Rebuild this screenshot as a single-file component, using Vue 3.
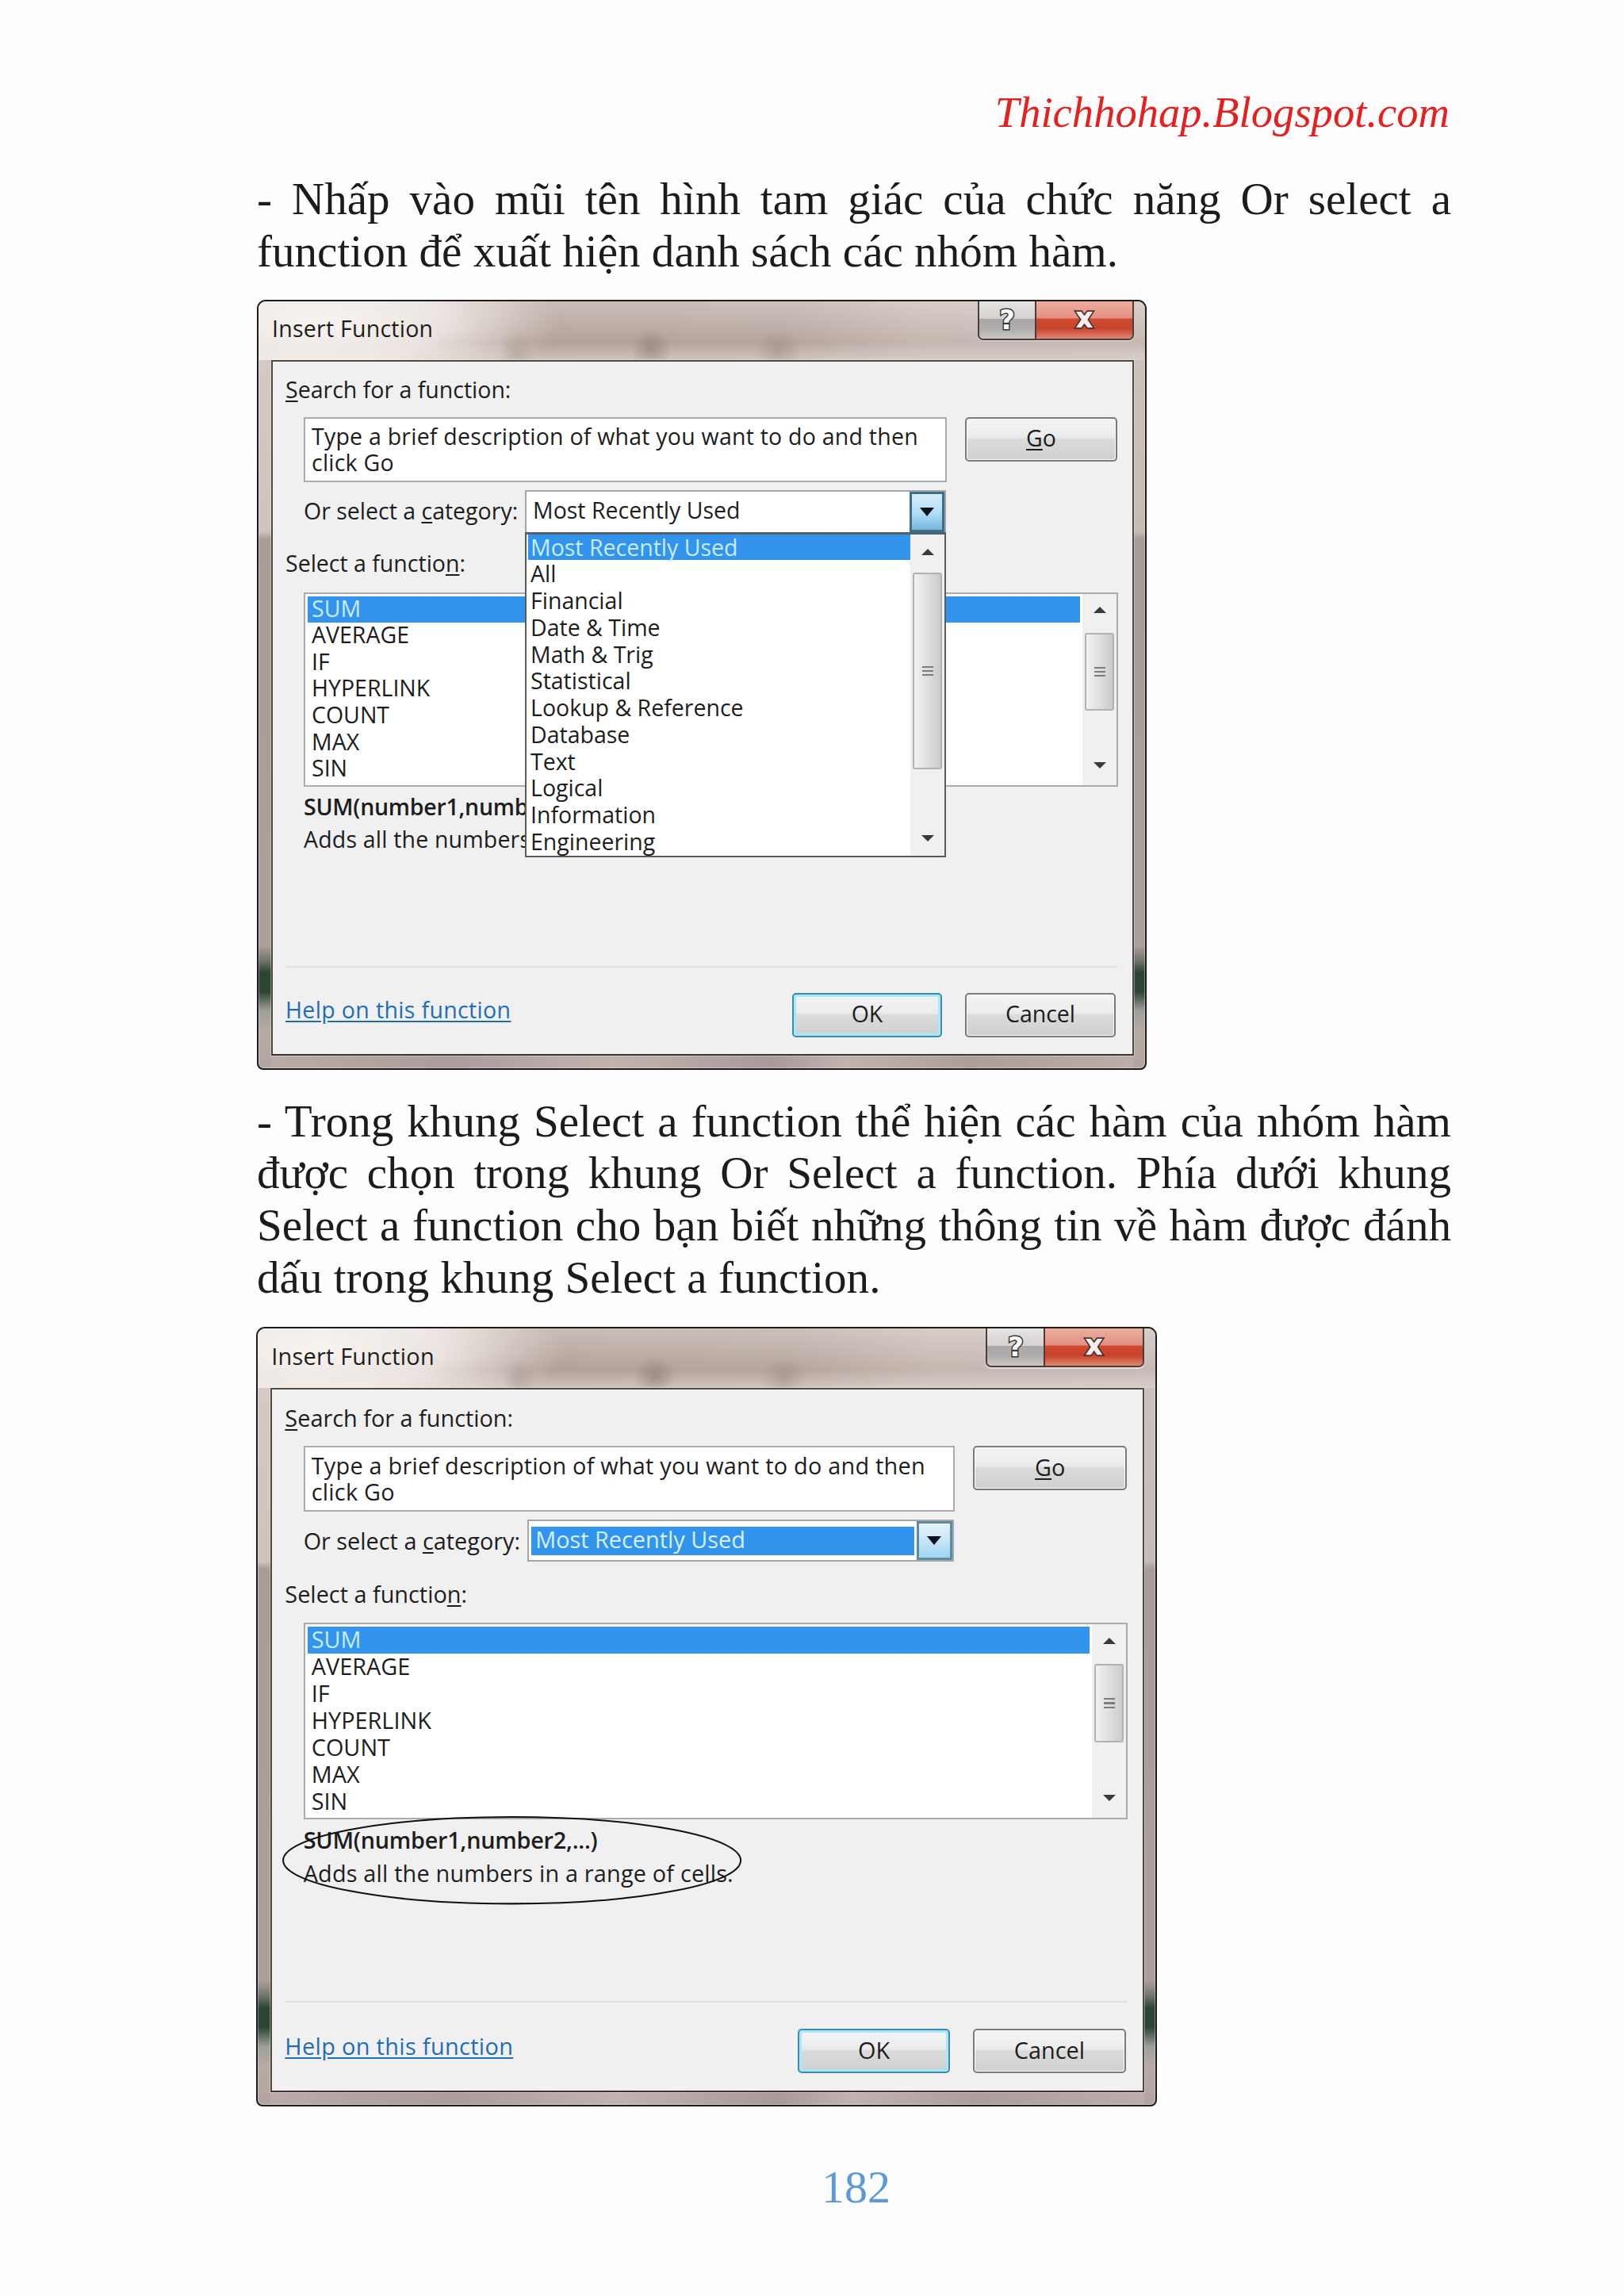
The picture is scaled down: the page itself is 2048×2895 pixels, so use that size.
<script setup>
const sections = [
  {
    text: '- Nhấp vào mũi tên hình tam giác của chức năng Or select a function để xuất hiện danh sách các nhóm hàm.',
    open: true,
  },
  {
    text: '- Trong khung Select a function thể hiện các hàm của nhóm hàm được chọn trong khung Or Select a function. Phía dưới khung Select a function cho bạn biết những thông tin về hàm được đánh dấu trong khung Select a function.',
    open: false,
  },
]
const categories = ['Most Recently Used', 'All', 'Financial', 'Date & Time', 'Math & Trig', 'Statistical', 'Lookup & Reference', 'Database', 'Text', 'Logical', 'Information', 'Engineering']
const functions = ['SUM', 'AVERAGE', 'IF', 'HYPERLINK', 'COUNT', 'MAX', 'SIN']
</script>

<template>
  <div class="page">
    <header class="brand">Thichhohap.Blogspot.com</header>
    <section v-for="(s, i) in sections" :key="i" class="block">
      <p class="para">{{ s.text }}</p>
      <div class="dialog" :class="{ second: !s.open }">
        <div class="titlebar">
          <span class="title">Insert Function</span>
          <div class="controls">
            <div class="ctl help"><span class="help-mark">?</span></div>
            <div class="ctl close">
              <svg width="29" height="26" viewBox="0 0 24 20">
                <path d="M2 1h7l3 4 3-4h7l-6 9 6 9h-7l-3-4-3 4H2l6-9z" fill="#f4efee" stroke="#4d3330" stroke-width="1.4" />
              </svg>
            </div>
          </div>
        </div>
        <div class="client">
          <div class="label search-label"><u>S</u>earch for a function:</div>
          <div class="search-row">
            <div class="textbox">Type a brief description of what you want to do and then click Go</div>
            <div class="btn go"><span><u>G</u>o</span></div>
          </div>
          <div class="category-row">
            <div class="category-label">Or select a <u>c</u>ategory:</div>
            <div class="combo">
              <div class="combo-value" :class="{ focused: !s.open }">Most Recently Used</div>
              <div class="drop"><i class="tri-down"></i></div>
              <div v-if="s.open" class="popup">
                <div class="popup-rows">
                  <div v-for="(c, k) in categories" :key="c" class="row" :class="{ sel: k === 0 }">{{ c }}</div>
                </div>
                <div class="scrollbar sb-popup">
                  <div class="arrow"><i class="tri-up"></i></div>
                  <div class="thumb"><i></i><i></i><i></i></div>
                  <div class="arrow end"><i class="tri-small"></i></div>
                </div>
              </div>
            </div>
          </div>
          <div class="label select-label">Select a functio<u>n</u>:</div>
          <div class="listbox">
            <div class="list-rows">
              <div v-for="(f, k) in functions" :key="f" class="row" :class="{ sel: k === 0 }">{{ f }}</div>
            </div>
            <div class="scrollbar sb-list">
              <div class="arrow"><i class="tri-up"></i></div>
              <div class="thumb"><i></i><i></i><i></i></div>
              <div class="arrow end"><i class="tri-small"></i></div>
            </div>
          </div>
          <div class="signature">SUM(number1,number2,...)</div>
          <div class="description">Adds all the numbers in a range of cells.</div>
          <div class="separator"></div>
          <div class="footer">
            <a class="help-link">Help on this function</a>
            <div class="btn ok"><span>OK</span></div>
            <div class="btn cancel"><span>Cancel</span></div>
          </div>
        </div>
        <svg v-if="!s.open" class="ellipse" width="574" height="112" viewBox="0 0 574 112">
          <ellipse cx="287" cy="56" rx="285" ry="54" fill="none" stroke="#111" stroke-width="2" />
        </svg>
      </div>
    </section>
    <footer class="page-number">182</footer>
  </div>
</template>

<style>
html, body { margin: 0; background: #fff; }
</style>

<style scoped>
.page {
  box-sizing: border-box;
  width: 2048px;
  min-height: 2895px;
  padding: 109px 218px 0 325px;
  background: #fefefe;
  font-family: "Liberation Serif", "Times New Roman", serif;
  color: #1c1c1c;
}
.brand {
  font-style: italic;
  font-size: 54.6px;
  line-height: 66px;
  color: #e5201f;
  text-align: right;
  margin-bottom: 43px;
  padding-right: 2px;
}
.para {
  margin: 0 0 28px -1px;
  font-size: 57.1px;
  line-height: 65.8px;
  text-align: justify;
}
.block + .block { margin-top: 32px; }
.block + .block .para { margin-bottom: 29px; }

.dialog {
  position: relative;
  box-sizing: border-box;
  width: 1122px;
  margin-left: -1px;
  padding-bottom: 16px;
  border: 2px solid #1e1b1b;
  border-radius: 11px 11px 8px 8px;
  font-family: "Open Sans", Roboto, sans-serif;
  font-size: 28.5px;
  line-height: 33px;
  color: #1d1d1d;
  background:
    linear-gradient(180deg, #d6cbc6 0, #cfc3be 30%, #a99c98 31%, #ad9f9b 84%, #6d7468 86%, #2c4534 87.5%, #2c4534 90%, #9ea09a 92.5%, #b8a9a4 95%, #b3a4a0 100%) left top / 16px 100% no-repeat,
    linear-gradient(180deg, #cfc3bd 0, #c7bbb6 30%, #a99c98 31%, #ad9f9b 84%, #6d7468 86%, #2c4534 87.5%, #2c4534 90%, #9ea09a 92.5%, #b8a9a4 95%, #b3a4a0 100%) right top / 14px 100% no-repeat,
    linear-gradient(90deg, #bbaca7, #ab9d99 22%, #c1b3ae 40%, #a89a96 58%, #c1b3ae 66%, #ad9e99 80%, #bdaea9) left bottom / 100% 18px no-repeat,
    #bfb1aa;
  box-shadow: inset 0 0 0 1px rgba(255, 255, 255, .35);
}
.dialog.second {
  zoom: 1.0125;
  margin-left: -2px;
}
.titlebar {
  display: flex;
  height: 74px;
  padding: 0 14px 0 17px;
  background:
    radial-gradient(ellipse 300px 100px at 80px 28px, rgba(250, 246, 243, .95) 0, rgba(250, 246, 243, .72) 50%, rgba(250, 246, 243, 0) 100%),
    radial-gradient(ellipse 22px 26px at 325px 62px, rgba(120, 100, 95, .3), rgba(120, 100, 95, 0)),
    radial-gradient(ellipse 26px 26px at 495px 60px, rgba(110, 90, 85, .38), rgba(110, 90, 85, 0)),
    radial-gradient(ellipse 30px 26px at 655px 62px, rgba(120, 100, 95, .28), rgba(120, 100, 95, 0)),
    linear-gradient(180deg, rgba(255, 255, 255, .3) 0, rgba(255, 255, 255, 0) 70%, rgba(230, 222, 218, .55) 100%),
    linear-gradient(90deg, #c8bab4 0, #b3a098 30%, #b7a69f 60%, #c6b7b0 75%, #c7bab4 100%);
  border-radius: 9px 9px 0 0;
}
.title {
  padding-top: 18px;
  letter-spacing: .25px;
}
.controls {
  display: flex;
  margin-left: auto;
  height: 49px;
  border: 2px solid #4a3d3a;
  border-top: 0;
  border-radius: 0 0 7px 7px;
  overflow: hidden;
  box-shadow: 0 1px 1px rgba(255, 255, 255, .55);
  box-sizing: border-box;
}
.ctl {
  display: flex;
  align-items: center;
  justify-content: center;
}
.help {
  width: 70px;
  background: linear-gradient(180deg, #e6e4e3 0, #d5d2d1 46%, #aaa8a7 48%, #b0aeac 75%, #cbc7c5 100%);
  border-right: 2px solid #4f3a36;
}
.help-mark {
  font-family: "DejaVu Sans", sans-serif;
  font-weight: 700;
  font-size: 34px;
  line-height: 40px;
  color: #fbfafa;
  -webkit-text-stroke: 3px #3a3535;
  paint-order: stroke fill;
}
.close {
  width: 121px;
  background: linear-gradient(180deg, #ecaea1 0, #e39080 44%, #cf4a2e 48%, #c8422a 72%, #dd8873 100%);
}

.client {
  box-sizing: border-box;
  display: flex;
  flex-direction: column;
  height: 877px;
  margin: 0 14px 0 16px;
  border: 2px solid #4f4946;
  border-bottom-color: #3a3534;
  background: #f0f0f1;
  box-shadow: 0 0 0 1px rgba(255, 255, 255, .35);
}
u { text-underline-offset: 3px; text-decoration-thickness: 2px; }
.label { padding-left: 16px; }
.search-label { margin-top: 19px; }
.search-row {
  display: flex;
  gap: 24px;
  margin: 18px 0 0 39px;
  align-items: flex-start;
}
.textbox {
  box-sizing: border-box;
  width: 811px;
  height: 82px;
  padding: 6px 8px 0;
  background: #fff;
  border: 2px solid #ababab;
  letter-spacing: .23px;
}
.btn {
  box-sizing: border-box;
  display: flex;
  align-items: center;
  justify-content: center;
  height: 56px;
  border: 2px solid #7b7b7b;
  border-radius: 5px;
  background: linear-gradient(180deg, #f4f4f4 0, #ececec 44%, #dbdbdb 50%, #cfcfcf 100%);
  box-shadow: inset 0 0 0 1px #fafafa;
}
.btn span { position: relative; top: -1px; }
.go { width: 192px; margin-left: -1px; }
.category-row {
  display: flex;
  margin: 10px 0 0 39px;
  height: 53px;
}
.category-label {
  width: 279px;
  padding-top: 10px;
  white-space: nowrap;
}
.combo {
  position: relative;
  box-sizing: border-box;
  display: flex;
  width: 531px;
  background: #fff;
  border: 2px solid #a6a6a6;
  border-bottom: 0;
}
.combo-value {
  flex: 1;
  margin: 7px 3px 6px;
  padding-left: 5px;
  line-height: 32px;
  height: 36px;
}
.combo-value.focused {
  background: #3294ec;
  color: #d3f0fd;
}
.drop {
  box-sizing: border-box;
  display: flex;
  align-items: center;
  justify-content: center;
  width: 44px;
  border: 3px solid #3f6f88;
  background: linear-gradient(180deg, #d5ecfa 0, #b5dff6 50%, #74b7de 100%);
}
.second .combo { border-bottom: 2px solid #a6a6a6; height: 53px; }
.second .drop { background: linear-gradient(180deg, #e6f4fc 0, #c5e6f8 50%, #9fd4f2 100%); border-color: #5f8ba2; }
.tri-down {
  width: 0;
  height: 0;
  border-left: 9px solid transparent;
  border-right: 9px solid transparent;
  border-top: 11px solid #0c1320;
}
.popup {
  position: absolute;
  left: -2px;
  top: 51px;
  z-index: 2;
  box-sizing: border-box;
  display: flex;
  width: 531px;
  height: 410px;
  background: #fff;
  border: 2px solid #5c5c5c;
  border-top: 3px solid #4f6472;
}
.popup-rows {
  flex: 1;
  overflow: hidden;
  padding: 0 0 0 2px;
}
.popup .row {
  height: 33.75px;
  line-height: 33px;
  padding-left: 3px;
  white-space: nowrap;
}
.sel {
  background: #3294ec;
  color: #c9ecfc;
}
.popup .row.sel { height: 32px; margin-bottom: 1.75px; }
.scrollbar {
  display: flex;
  flex-direction: column;
  width: 43px;
  background: #f0f0f0;
}
.arrow {
  display: flex;
  align-items: center;
  justify-content: center;
  height: 44px;
}
.arrow.end { margin-top: auto; }
.tri-up {
  width: 0;
  height: 0;
  border-left: 8px solid transparent;
  border-right: 8px solid transparent;
  border-bottom: 8px solid #3a3a3a;
}
.tri-small {
  width: 0;
  height: 0;
  border-left: 8px solid transparent;
  border-right: 8px solid transparent;
  border-top: 8px solid #3a3a3a;
}
.thumb {
  box-sizing: border-box;
  display: flex;
  flex-direction: column;
  align-items: center;
  justify-content: center;
  gap: 3px;
  margin: 0 3px;
  border: 2px solid #b2b2b2;
  border-radius: 3px;
  background: linear-gradient(90deg, #f2f2f2 0, #dfdfdf 50%, #cbcbcb 100%);
}
.thumb i {
  display: block;
  width: 14px;
  height: 2px;
  background: #7c7c7c;
}
.sb-popup .thumb { height: 248px; margin-top: 4px; }
.sb-list .arrow { height: 41px; }
.sb-list .thumb { height: 98px; margin-top: 8px; }
.sb-list .arrow.end { height: 50px; }

.select-label { margin-top: 23px; }
.listbox {
  box-sizing: border-box;
  display: flex;
  width: 1027px;
  height: 245px;
  margin: 20px 0 0 39px;
  background: #fff;
  border: 2px solid #ababab;
}
.list-rows {
  flex: 1;
  padding: 3px 3px 0 3px;
  overflow: hidden;
}
.list-rows .row {
  height: 33.6px;
  line-height: 31px;
  padding-left: 5px;
}
.signature {
  margin: 9px 0 0 39px;
  font-weight: 600;
  letter-spacing: -.25px;
}
.description {
  margin: 8px 0 0 39px;
  letter-spacing: .18px;
}
.separator {
  height: 2px;
  margin: auto 19px 0 17px;
  background: #dfdfe0;
}
.footer {
  display: flex;
  align-items: flex-start;
  padding: 32px 21px 21px 16px;
}
.help-link {
  margin-top: 5px;
  margin-right: auto;
  color: #1f6db5;
  text-decoration: underline;
  text-underline-offset: 3px;
  letter-spacing: .35px;
}
.ok {
  width: 189px;
  margin-right: 29px;
  border-color: #3c8cad;
  box-shadow: inset 0 0 0 3px #a8e7f8;
}
.cancel { width: 190px; }
.ellipse {
  position: absolute;
  left: 30px;
  top: 607px;
  z-index: 3;
}
.page-number {
  margin-top: 66px;
  font-size: 58px;
  line-height: 72px;
  color: #5b9bd5;
  text-align: center;
  padding-left: 4px;
}
</style>
